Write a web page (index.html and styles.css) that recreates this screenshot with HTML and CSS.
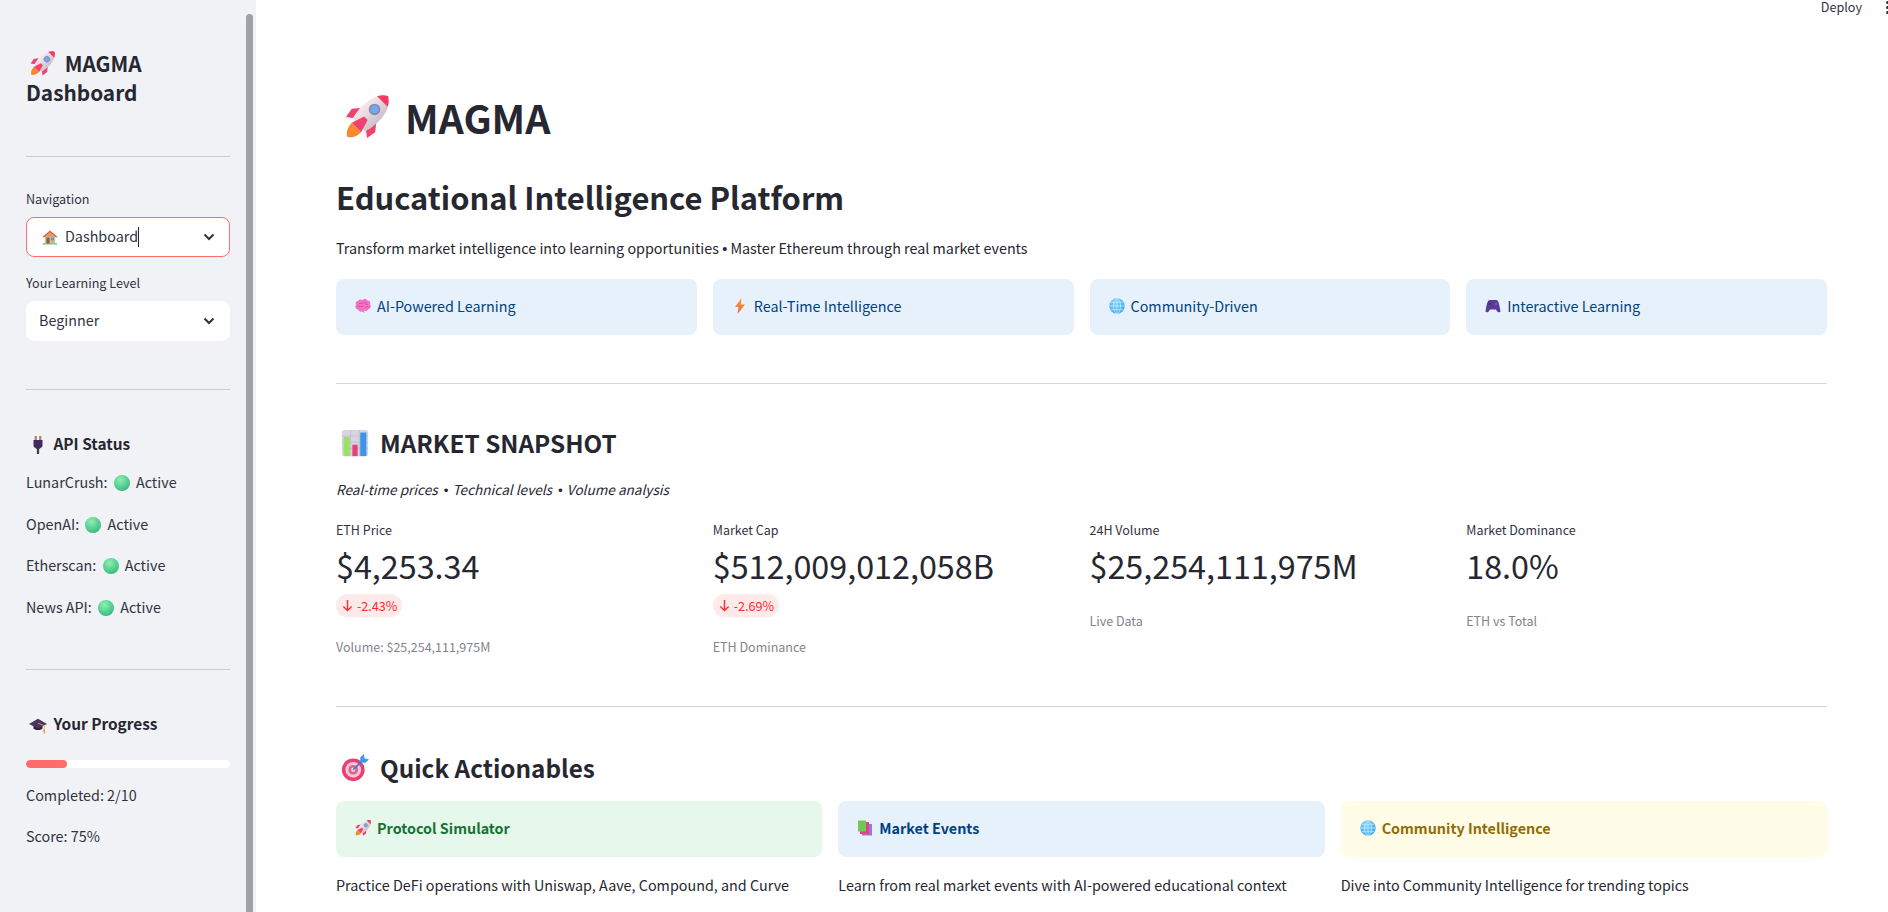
FILE: index.html
```html
<!DOCTYPE html>
<html lang="en">
<head>
  <meta charset="UTF-8">
  <meta name="viewport" content="width=device-width, initial-scale=1.0">
  <title>MAGMA Dashboard</title>
  <link rel="stylesheet" href="styles.css">
</head>
<body>
  <!-- Emoji drawn once, reused below -->
  <svg class="sprites" aria-hidden="true">
    <defs>
      <linearGradient id="bodyGrad" x1="0" y1="0" x2="1" y2="0"><stop offset="0" stop-color="#f6eaee"/><stop offset="1" stop-color="#cdc0ca"/></linearGradient>
      <radialGradient id="greenGrad" cx="0.4" cy="0.3" r="0.8"><stop offset="0" stop-color="#8df0b0"/><stop offset="1" stop-color="#2eb47c"/></radialGradient>
      <radialGradient id="globeGrad" cx="0.4" cy="0.3" r="0.8"><stop offset="0" stop-color="#7fd4fb"/><stop offset="1" stop-color="#3aa4ea"/></radialGradient>
      <linearGradient id="boltGrad" x1="0" y1="0" x2="0" y2="1"><stop offset="0" stop-color="#fca13a"/><stop offset="1" stop-color="#f3603c"/></linearGradient>
    </defs>
    <symbol id="e-rocket" viewBox="0 0 32 32">
      <g transform="translate(16 16) rotate(45) scale(1.2) translate(-16 -16)">
        <path d="M12 25 H20 C20 29 18 32 16 33 C14 32 12 29 12 25Z" fill="#f88a2c"/>
        <path d="M10 14 L6 19 L7 25 L11 22Z" fill="#f2406f"/>
        <path d="M22 14 L26 19 L25 25 L21 22Z" fill="#f2406f"/>
        <path d="M16 -2 C22.500 2 24.500 11 21.500 23 H10.500 C7.500 11 9.500 2 16 -2Z" fill="url(#bodyGrad)"/>
        <path d="M16 -2 C18 -0.800 19.500 0.700 20.500 2.800 H11.500 C12.500 0.700 14 -0.800 16 -2Z" fill="#f23a5e"/>
        <circle cx="16" cy="9.500" r="3" fill="#6fa8f5" stroke="#8d87a8" stroke-width="1"/>
        <path d="M14.500 17 H17.500 L20 25 H12Z" fill="#f2406f"/>
      </g>
    </symbol>
    <symbol id="e-house" viewBox="0 0 32 32">
      <rect x="2" y="28" width="28" height="3" fill="#5fd08a"/>
      <rect x="6" y="13" width="20" height="16" fill="#e2b48a"/>
      <path d="M16 3 L31 16 L28 17 L16 7 L4 17 L1 16Z" fill="#e4572e"/>
      <path d="M16 7 L6 15 H26Z" fill="#d79a6a"/>
      <rect x="9" y="17" width="6" height="12" fill="#8a5a44"/>
      <rect x="18" y="17" width="6" height="6" fill="#39a7e8"/>
    </symbol>
    <symbol id="e-plug" viewBox="0 0 32 32">
      <rect x="10" y="0" width="4" height="8" fill="#a68c68"/>
      <rect x="18" y="0" width="4" height="8" fill="#a68c68"/>
      <path d="M8 7 H24 V17 C24 20 20 22 18.500 23 H13.500 C12 22 8 20 8 17Z" fill="#432a63"/>
      <rect x="14" y="22" width="4" height="10" fill="#3a3a44"/>
    </symbol>
    <symbol id="e-green" viewBox="0 0 32 32"><circle cx="16" cy="16" r="16" fill="url(#greenGrad)"/></symbol>
    <symbol id="e-cap" viewBox="0 0 32 32">
      <path d="M8 15 V22 C12 26 20 26 24 22 V15Z" fill="#2e2238"/>
      <path d="M16 5 L32 14 L16 22 L0 14Z" fill="#4a3560"/>
      <path d="M16 13 L27 17 V24" fill="none" stroke="#f5a03a" stroke-width="1.500"/>
      <path d="M25.500 24 H28.500 L28 31 H26Z" fill="#f5883a"/>
    </symbol>
    <symbol id="e-brain" viewBox="0 0 32 32">
      <path d="M6 6 C8 2 13 3 15 4 C18 1 23 2 25 5 C29 5 32 9 30 13 C33 16 31 22 27 22 C26 26 21 27 18 25 L19 30 L14 27 C10 28 7 26 6 23 C2 23 -1 18 2 14 C0 10 2 6 6 6Z" fill="#f472c4"/>
      <path d="M8 11 C12 9 14 12 17 10 M5 17 C10 15 13 19 17 16 M20 7 C19 13 23 13 26 12 M21 19 C23 17 25 18 28 17" fill="none" stroke="#c940a0" stroke-width="1.600"/>
    </symbol>
    <symbol id="e-bolt" viewBox="0 0 32 32"><path d="M19 0 L6 18 H13 L11 32 L26 13 H18Z" fill="url(#boltGrad)"/></symbol>
    <symbol id="e-globe" viewBox="0 0 32 32">
      <circle cx="16" cy="16" r="15.500" fill="url(#globeGrad)"/>
      <g fill="none" stroke="#d4f1ff" stroke-width="1.300">
        <ellipse cx="16" cy="16" rx="7" ry="15"/>
        <path d="M16 1 V31 M1 16 H31 M3.500 8.500 H28.500 M3.500 23.500 H28.500"/>
      </g>
    </symbol>
    <symbol id="e-pad" viewBox="0 0 32 32">
      <path d="M9 4 H23 C27 4 29 14 31 27 C29 30 25 29 22 23 H10 C7 29 3 30 1 27 C3 14 5 4 9 4Z" fill="#5b3a98"/>
      <circle cx="10" cy="12" r="2" fill="#3a2468"/>
      <circle cx="22" cy="12" r="2" fill="#8e6fd0"/>
    </symbol>
    <symbol id="e-chart" viewBox="0 0 32 32">
      <rect x="1" y="1" width="30" height="30" rx="3" fill="#d9d4e2"/>
      <path d="M1 8 H31 M1 15 H31 M1 22 H31 M11 1 V31 M21 1 V31" stroke="#bfb9cc" stroke-width="0.800"/>
      <rect x="3" y="9" width="7" height="22" fill="#9be060"/>
      <rect x="13" y="18" width="6" height="13" fill="#ea3d7e"/>
      <rect x="22" y="4" width="7" height="27" fill="#3a94e8"/>
    </symbol>
    <symbol id="e-target" viewBox="0 0 32 32">
      <circle cx="14" cy="18" r="13" fill="#e93f74"/>
      <circle cx="14" cy="18" r="9" fill="#f4c7d4"/>
      <circle cx="14" cy="18" r="5.500" fill="#e8608a"/>
      <circle cx="14" cy="18" r="2.500" fill="#e6d6dc"/>
      <path d="M14 18 L25 7" stroke="#2f7fd0" stroke-width="2"/>
      <path d="M22 4 L26 0 L27 5 L32 6 L28 10 H22Z" fill="#3a9be8"/>
    </symbol>
    <symbol id="e-books" viewBox="0 0 32 32">
      <rect x="10" y="8" width="20" height="23" fill="#9a78d8"/>
      <rect x="6" y="4" width="18" height="24" fill="#e8407a"/>
      <rect x="2" y="1" width="16" height="22" fill="#6fc85a"/>
    </symbol>
  </svg>

  <div class="app">
    <aside class="sidebar">
      <h2 class="side-title"><svg class="emoji side-title-icon"><use href="#e-rocket"/></svg> MAGMA Dashboard</h2>
      <hr class="side-rule side-rule-first">

      <label class="field-label">Navigation</label>
      <div class="select select-focus">
        <span class="select-text"><svg class="emoji select-icon"><use href="#e-house"/></svg> Dashboard<i class="caret"></i></span>
        <svg class="chevron" viewBox="0 0 12 8"><path d="M1.500 1.500 L6 6 L10.500 1.500" fill="none" stroke="#31333f" stroke-width="2"/></svg>
      </div>
      <label class="field-label field-label-next">Your Learning Level</label>
      <div class="select">
        <span class="select-text">Beginner</span>
        <svg class="chevron" viewBox="0 0 12 8"><path d="M1.500 1.500 L6 6 L10.500 1.500" fill="none" stroke="#31333f" stroke-width="2"/></svg>
      </div>
      <hr class="side-rule side-rule-mid">

      <h4 class="side-head"><svg class="emoji"><use href="#e-plug"/></svg> API Status</h4>
      <p class="status">LunarCrush: <svg class="emoji"><use href="#e-green"/></svg> Active</p>
      <p class="status">OpenAI: <svg class="emoji"><use href="#e-green"/></svg> Active</p>
      <p class="status">Etherscan: <svg class="emoji"><use href="#e-green"/></svg> Active</p>
      <p class="status">News API: <svg class="emoji"><use href="#e-green"/></svg> Active</p>
      <hr class="side-rule side-rule-low">

      <h4 class="side-head"><svg class="emoji"><use href="#e-cap"/></svg> Your Progress</h4>
      <div class="progress"><div class="progress-fill"></div></div>
      <p class="status">Completed: 2/10</p>
      <p class="status">Score: 75%</p>

      <div class="side-scroll"></div>
    </aside>

    <main class="main">
      <div class="toolbar">
        <span>Deploy</span>
        <span class="dots"><i></i><i></i><i></i></span>
      </div>

      <h1 class="page-title"><svg class="emoji page-title-icon"><use href="#e-rocket"/></svg>MAGMA</h1>
      <h2 class="page-sub">Educational Intelligence Platform</h2>
      <p class="lead">Transform market intelligence into learning opportunities <span class="dot">•</span> Master Ethereum through real market events</p>

      <div class="grid-4">
        <div class="box box-blue"><svg class="emoji"><use href="#e-brain"/></svg> AI-Powered Learning</div>
        <div class="box box-blue"><svg class="emoji"><use href="#e-bolt"/></svg> Real-Time Intelligence</div>
        <div class="box box-blue"><svg class="emoji"><use href="#e-globe"/></svg> Community-Driven</div>
        <div class="box box-blue"><svg class="emoji"><use href="#e-pad"/></svg> Interactive Learning</div>
      </div>

      <hr class="rule">

      <h3 class="section-title"><svg class="emoji section-icon"><use href="#e-chart"/></svg>MARKET SNAPSHOT</h3>
      <p class="section-note">Real-time prices <span class="dot">•</span> Technical levels <span class="dot">•</span> Volume analysis</p>

      <div class="grid-4 metrics">
        <div class="metric">
          <div class="metric-label">ETH Price</div>
          <div class="metric-value">$4,253.34</div>
          <span class="delta"><svg class="delta-arrow" viewBox="0 0 12 14"><path d="M6 1 V12.500 M1.500 8 L6 12.500 L10.500 8" fill="none" stroke="#ff2b2b" stroke-width="1.500"/></svg>-2.43%</span>
          <div class="metric-note">Volume: $25,254,111,975M</div>
        </div>
        <div class="metric">
          <div class="metric-label">Market Cap</div>
          <div class="metric-value">$512,009,012,058B</div>
          <span class="delta"><svg class="delta-arrow" viewBox="0 0 12 14"><path d="M6 1 V12.500 M1.500 8 L6 12.500 L10.500 8" fill="none" stroke="#ff2b2b" stroke-width="1.500"/></svg>-2.69%</span>
          <div class="metric-note">ETH Dominance</div>
        </div>
        <div class="metric">
          <div class="metric-label">24H Volume</div>
          <div class="metric-value">$25,254,111,975M</div>
          <div class="metric-note metric-note-plain">Live Data</div>
        </div>
        <div class="metric">
          <div class="metric-label">Market Dominance</div>
          <div class="metric-value">18.0%</div>
          <div class="metric-note metric-note-plain">ETH vs Total</div>
        </div>
      </div>

      <hr class="rule rule-low">

      <h3 class="section-title section-title-quick"><svg class="emoji section-icon"><use href="#e-target"/></svg>Quick Actionables</h3>
      <div class="grid-3">
        <div class="action">
          <div class="box box-green"><svg class="emoji"><use href="#e-rocket"/></svg> Protocol Simulator</div>
          <p class="action-text">Practice DeFi operations with Uniswap, Aave, Compound, and Curve</p>
        </div>
        <div class="action">
          <div class="box box-blue box-strong"><svg class="emoji"><use href="#e-books"/></svg> Market Events</div>
          <p class="action-text">Learn from real market events with AI-powered educational context</p>
        </div>
        <div class="action">
          <div class="box box-yellow"><svg class="emoji"><use href="#e-globe"/></svg> Community Intelligence</div>
          <p class="action-text">Dive into Community Intelligence for trending topics</p>
        </div>
      </div>
    </main>
  </div>
</body>
</html>
```

FILE: styles.css
```css
/* General */
html, body {
  margin: 0;
  height: 100%;
  overflow: hidden;
}

body {
  font-family: "Noto Sans CJK SC", "Lato", sans-serif;
  font-size: 14.35px;
  color: #31333f;
  background: #ffffff;
}

.sprites {
  position: absolute;
  width: 0;
  height: 0;
}

.emoji {
  width: 16px;
  height: 16px;
  vertical-align: -3px;
}

.dot {
  font-family: "Liberation Sans", sans-serif;
  font-style: normal;
}

.app {
  display: flex;
  height: 912px;
}

/* Sidebar */
.sidebar {
  position: relative;
  width: 256px;
  flex-shrink: 0;
  box-sizing: border-box;
  padding: 49px 26px 0;
  background: #f0f2f6;
  overflow: hidden;
}

.side-title {
  margin: 0;
  font-size: 20.8px;
  line-height: 29px;
  font-weight: 700;
  color: #262730;
}

.side-title-icon {
  width: 25px;
  height: 25px;
  margin: 0 5px 0 4px;
  vertical-align: -4px;
}

.side-rule {
  border: none;
  border-top: 1px solid #cbccd1;
  margin: 0;
}

.side-rule-first { margin-top: 49px; margin-bottom: 32px; }
.side-rule-mid { margin-top: 48px; margin-bottom: 39px; }
.side-rule-low { margin-top: 50px; margin-bottom: 39px; }

.field-label {
  display: block;
  font-size: 12.6px;
  line-height: 20px;
  margin-bottom: 8px;
}

.field-label-next { margin-top: 16px; }

.select {
  display: flex;
  align-items: center;
  justify-content: space-between;
  box-sizing: border-box;
  height: 40px;
  padding: 0 12px;
  background: #ffffff;
  border: 1px solid #ffffff;
  border-radius: 8px;
}

.select-focus { border-color: #ff6c6c; }

.select-text {
  display: flex;
  align-items: center;
  gap: 7px;
  margin-top: -3px;
}

.select-icon { margin-left: 3px; margin-top: 3px; }

.caret {
  width: 1px;
  height: 20px;
  margin-left: -7px;
  margin-top: 3px;
  background: #262730;
}

.chevron {
  width: 12px;
  height: 8px;
  margin-right: 2px;
}

.side-head {
  margin: 0 0 13px;
  padding-left: 3px;
  font-size: 15.4px;
  line-height: 28px;
  font-weight: 700;
  color: #262730;
}

.side-head .emoji {
  width: 18px;
  height: 18px;
  margin-right: 3px;
  vertical-align: -4px;
}

.status {
  margin: 0 0 17.6px;
  line-height: 24px;
}

.status .emoji { margin: 0 3px; }

.progress {
  height: 8px;
  margin: 23px 0 15px;
  background: #ffffff;
  border-radius: 8px;
  overflow: hidden;
}

.progress-fill {
  width: 20%;
  height: 100%;
  background: #ff6c6c;
  border-radius: 8px;
}

.side-scroll {
  position: absolute;
  top: 14px;
  bottom: 0;
  left: 246px;
  width: 7px;
  background: #a0a2a7;
  border-radius: 4px 4px 0 0;
}

/* Main */
.main {
  position: relative;
  flex: 1;
  min-width: 0;
  box-sizing: border-box;
  padding: 86px 61px 0 80px;
  overflow: hidden;
}

.toolbar {
  position: absolute;
  top: 0;
  right: -1px;
  display: flex;
  align-items: center;
  gap: 24px;
  height: 14px;
  font-size: 12.6px;
  line-height: 14px;
}

.dots {
  display: flex;
  flex-direction: column;
  gap: 2px;
}

.dots i {
  display: block;
  width: 3px;
  height: 3px;
  border-radius: 50%;
  background: #31333f;
}

.page-title {
  display: flex;
  align-items: center;
  margin: 0;
  font-size: 39.4px;
  line-height: 62px;
  font-weight: 700;
  color: #262730;
}

.page-title-icon {
  width: 44px;
  height: 44px;
  margin: 0 16px 0 9px;
}

.page-sub {
  margin: 24px 0 0;
  font-size: 30.9px;
  line-height: 50px;
  font-weight: 600;
  color: #262730;
}

.lead {
  margin: 14px 0 0;
  line-height: 24px;
  color: #262730;
}

.grid-4 {
  display: grid;
  grid-template-columns: repeat(4, 1fr);
  gap: 16px;
}

.lead + .grid-4 { margin-top: 18px; }

.grid-3 {
  display: grid;
  grid-template-columns: repeat(3, 1fr);
  gap: 16px;
}

.box {
  height: 56px;
  box-sizing: border-box;
  display: flex;
  align-items: center;
  gap: 6px;
  padding: 0 19px 2px;
  border-radius: 8px;
  line-height: 24px;
}

.box .emoji { flex-shrink: 0; }

.box-blue { background: #e7f1fb; color: #004280; }
.box-green { background: #e6f7ec; color: #177233; font-weight: 600; }
.box-yellow { background: #fffce7; color: #926c05; font-weight: 600; }
.box-strong { font-weight: 600; }

.rule {
  border: none;
  border-top: 1px solid #d6d6d9;
  margin: 48px 0 0;
}

.section-title {
  display: flex;
  align-items: center;
  margin: 39px 0 0;
  font-size: 24.3px;
  line-height: 40px;
  font-weight: 600;
  color: #262730;
}

.section-icon {
  width: 28px;
  height: 28px;
  margin: 0 11px 0 5px;
}

.section-note {
  margin: 14px 0 0;
  font-size: 13.6px;
  font-style: italic;
  line-height: 24px;
  color: #262730;
}

.section-note .dot { margin: 0 1px 0 3px; }

.metrics { margin-top: 17px; }

.metric-label {
  font-size: 12.5px;
  line-height: 20px;
}

.metric-value {
  font-size: 32.3px;
  line-height: 50px;
  color: #262730;
  white-space: nowrap;
}

.delta {
  display: inline-flex;
  align-items: center;
  gap: 4px;
  height: 23px;
  padding: 0 5px 0 6px;
  margin-top: 4px;
  border-radius: 12px;
  background: #ffe9e9;
  color: #ff2b2b;
  font-size: 12.6px;
}

.delta-arrow {
  width: 11px;
  height: 13px;
}

.metric-note {
  margin-top: 20px;
  font-size: 12.5px;
  line-height: 20px;
  color: #83848b;
}

.metric-note-plain { margin-top: 21px; }

.rule-low { margin-top: 49px; }

.section-title-quick { margin-top: 41px; margin-bottom: 13px; }

.action-text {
  margin: 16px 0 0;
  line-height: 24px;
  color: #262730;
}
```
